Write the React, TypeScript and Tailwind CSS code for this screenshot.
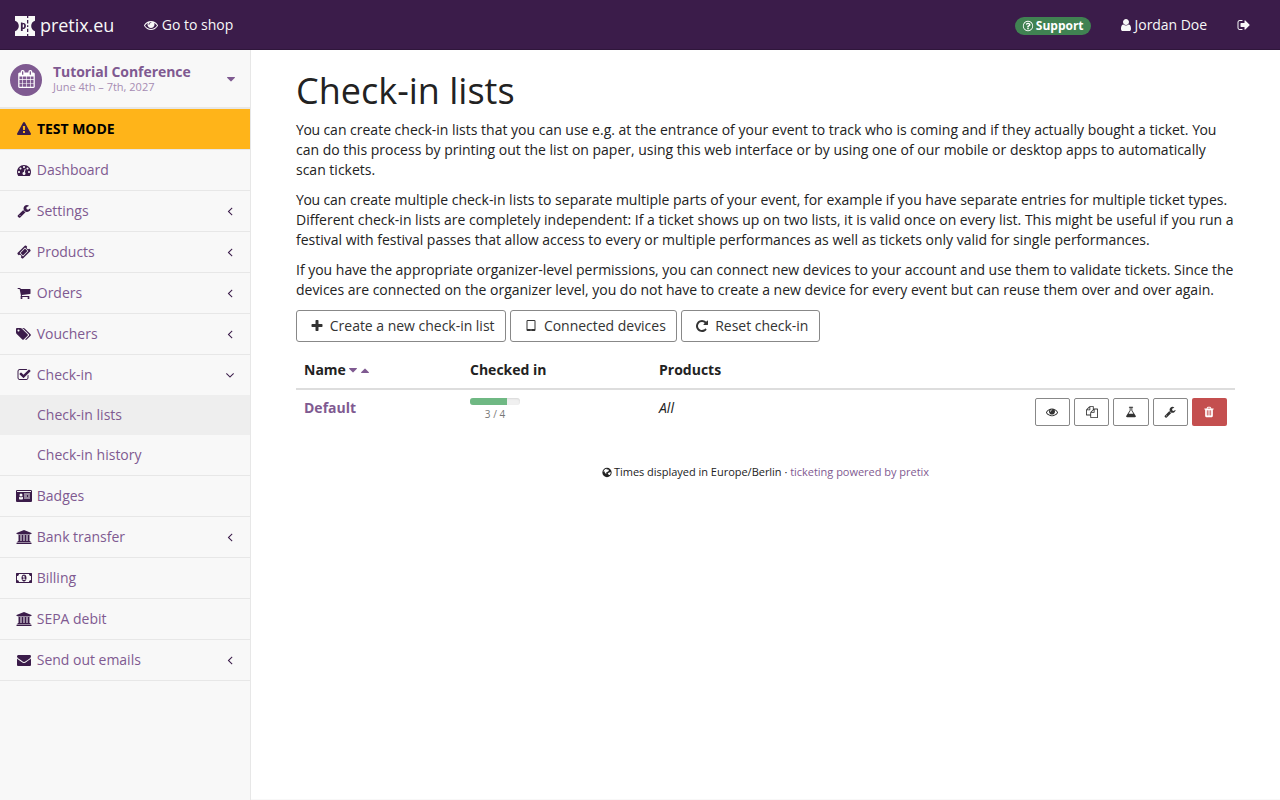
import React from "react";

const paths = {
  eye: "M1664 960q-152-236-381-353 61 104 61 225 0 185-131.5 316.5t-316.5 131.5-316.5-131.5-131.5-316.5q0-121 61-225-229 117-381 353 133 205 333.5 326.5t434.5 121.5 434.5-121.5 333.5-326.5zm-720-384q0-20-14-34t-34-14q-125 0-214.5 89.5t-89.5 214.5q0 20 14 34t34 14 34-14 14-34q0-86 61-147t147-61q20 0 34-14t14-34zm848 384q0 34-20 69-140 230-376.5 368.5t-499.5 138.5-499.5-139-376.5-368q-20-35-20-69t20-69q140-229 376.5-368t499.5-139 499.5 139 376.5 368q20 35 20 69z",
  user: "M1536 1399q0 109-62.5 187t-150.5 78h-854q-88 0-150.5-78t-62.5-187q0-85 8.5-160.5t31.5-152 58.5-131 94-89 134.5-34.5q131 128 313 128t313-128q76 0 134.5 34.5t94 89 58.5 131 31.5 152 8.5 160.5zm-256-887q0 159-112.5 271.5t-271.5 112.5-271.5-112.5-112.5-271.5 112.5-271.5 271.5-112.5 271.5 112.5 112.5 271.5z",
  signOut: "M704 1440q0 4 1 20t.5 26.5-3 23.5-10 19.5-20.5 6.5h-320q-119 0-203.5-84.5t-84.5-203.5v-704q0-119 84.5-203.5t203.5-84.5h320q13 0 22.5 9.5t9.5 22.5q0 4 1 20t.5 26.5-3 23.5-10 19.5-20.5 6.5h-320q-66 0-113 47t-47 113v704q0 66 47 113t113 47h312l11.5 1 11.5 3 8 5.5 7 9 2 13.5zm928-544q0 26-19 45l-544 544q-19 19-45 19t-45-19-19-45v-288h-448q-26 0-45-19t-19-45v-384q0-26 19-45t45-19h448v-288q0-26 19-45t45-19 45 19l544 544q19 19 19 45z",
  question: "M1008 1200v160q0 14-9 23t-23 9h-160q-14 0-23-9t-9-23v-160q0-14 9-23t23-9h160q14 0 23 9t9 23zm256-496q0 50-15 90t-45.5 69-52 44-59.5 36q-32 18-46.5 28t-26 24-11.5 29v32q0 14-9 23t-23 9h-160q-14 0-23-9t-9-23v-68q0-35 10.5-64.5t24-47.5 39-35.5 41-25.5 44.5-21q53-25 75-43t22-49q0-42-43.5-71.5t-95.5-29.5q-56 0-95 27-29 20-80 83-9 12-25 12-11 0-19-6l-108-82q-10-7-12-20t5-23q122-192 349-192 129 0 238.5 89.5t109.5 214.5zm-368-448q-130 0-248.5 51t-204 136.5-136.5 204-51 248.5 51 248.5 136.5 204 204 136.5 248.5 51 248.5-51 204-136.5 136.5-204 51-248.5-51-248.5-136.5-204-204-136.5-248.5-51zm768 640q0 209-103 385.5t-279.5 279.5-385.5 103-385.5-103-279.5-279.5-103-385.5 103-385.5 279.5-279.5 385.5-103 385.5 103 279.5 279.5 103 385.5z",
  calendar: "M192 1664h288v-288h-288v288zm352 0h320v-288h-320v288zm-352-352h288v-320h-288v320zm352 0h320v-320h-320v320zm-352-384h288v-288h-288v288zm736 736h320v-288h-320v288zm-384-736h320v-288h-320v288zm768 736h288v-288h-288v288zm-384-352h320v-320h-320v320zm-352-864v-288q0-13-9.5-22.5t-22.5-9.5h-64q-13 0-22.5 9.5t-9.5 22.5v288q0 13 9.5 22.5t22.5 9.5h64q13 0 22.5-9.5t9.5-22.5zm736 864h288v-320h-288v320zm-384-384h320v-288h-320v288zm384 0h288v-288h-288v288zm32-480v-288q0-13-9.5-22.5t-22.5-9.5h-64q-13 0-22.5 9.5t-9.5 22.5v288q0 13 9.5 22.5t22.5 9.5h64q13 0 22.5-9.5t9.5-22.5zm384-64v1280q0 52-38 90t-90 38h-1408q-52 0-90-38t-38-90v-1280q0-52 38-90t90-38h128v-96q0-66 47-113t113-47h64q66 0 113 47t47 113v96h384v-96q0-66 47-113t113-47h64q66 0 113 47t47 113v96h128q52 0 90 38t38 90z",
  warning: "M1024 1375v-190q0-14-9.5-23.5t-22.5-9.5h-192q-13 0-22.5 9.5t-9.5 23.5v190q0 14 9.5 23.5t22.5 9.5h192q13 0 22.5-9.5t9.5-23.5zm-2-374l18-459q0-12-10-19-13-11-24-11h-220q-11 0-24 11-10 7-10 21l17 457q0 10 10 16.5t24 6.5h185q14 0 23.5-6.5t10.5-16.5zm-14-934l768 1408q35 63-2 126-17 29-46.5 46t-63.5 17h-1536q-34 0-63.5-17t-46.5-46q-37-63-2-126l768-1408q17-31 47-49t65-18 65 18 47 49z",
  dashboard: "M384 1152q0-53-37.5-90.5t-90.5-37.5-90.5 37.5-37.5 90.5 37.5 90.5 90.5 37.5 90.5-37.5 37.5-90.5zm192-448q0-53-37.5-90.5t-90.5-37.5-90.5 37.5-37.5 90.5 37.5 90.5 90.5 37.5 90.5-37.5 37.5-90.5zm428 481l101-382q6-26-7.5-48.5t-38.5-29.5-48 6.5-30 39.5l-101 382q-60 5-107 43.5t-63 98.5q-20 77 20 146t117 89 146-20 89-117q16-60-6-117t-72-91zm660-33q0-53-37.5-90.5t-90.5-37.5-90.5 37.5-37.5 90.5 37.5 90.5 90.5 37.5 90.5-37.5 37.5-90.5zm-640-640q0-53-37.5-90.5t-90.5-37.5-90.5 37.5-37.5 90.5 37.5 90.5 90.5 37.5 90.5-37.5 37.5-90.5zm448 192q0-53-37.5-90.5t-90.5-37.5-90.5 37.5-37.5 90.5 37.5 90.5 90.5 37.5 90.5-37.5 37.5-90.5zm320 448q0 261-141 483-19 29-54 29h-1402q-35 0-54-29-141-221-141-483 0-182 71-348t191-286 286-191 348-71 348 71 286 191 191 286 71 348z",
  wrench: "M448 1472q0-26-19-45t-45-19-45 19-19 45 19 45 45 19 45-19 19-45zm644-420l-682 682q-37 37-90 37-52 0-91-37l-106-108q-38-36-38-90 0-53 38-91l681-681q39 98 114.5 173.5t173.5 114.5zm634-435q0 39-23 106-47 134-164.5 217.5t-258.5 83.5q-185 0-316.5-131.5t-131.5-316.5 131.5-316.5 316.5-131.5q58 0 121.5 16.5t107.5 46.5q16 11 16 28t-16 28l-293 169v224l193 107q5-3 79-48.5t135.5-81 70.5-35.5q15 0 23.5 10t8.5 25z",
  ticket: "M1024 452l316 316-572 572-316-316zm-211 979l618-618q19-19 19-45t-19-45l-362-362q-18-18-45-18t-45 18l-618 618q-19 19-19 45t19 45l362 362q18 18 45 18t45-18zm889-637l-907 908q-37 37-90.5 37t-90.5-37l-126-126q56-56 56-136t-56-136-136-56-136 56l-125-126q-37-37-37-90.5t37-90.5l907-906q37-37 90.5-37t90.5 37l125 125q-56 56-56 136t56 136 136 56 136-56l126 125q37 37 37 90.5t-37 90.5z",
  cart: "M704 1536q0 52-38 90t-90 38-90-38-38-90 38-90 90-38 90 38 38 90zm896 0q0 52-38 90t-90 38-90-38-38-90 38-90 90-38 90 38 38 90zm128-1088v512q0 24-16.5 42.5t-40.5 21.5l-1044 122q13 60 13 70 0 16-24 64h920q26 0 45 19t19 45-19 45-45 19h-1024q-26 0-45-19t-19-45q0-11 8-31.5t16-36 21.5-40 15.5-29.5l-177-823h-204q-26 0-45-19t-19-45 19-45 45-19h256q16 0 28.5 6.5t19.5 15.5 13 24.5 8 26 5.5 29.5 4.5 26h1201q26 0 45 19t19 45z",
  tags: "M384 448q0-53-37.5-90.5t-90.5-37.5-90.5 37.5-37.5 90.5 37.5 90.5 90.5 37.5 90.5-37.5 37.5-90.5zm1067 576q0 53-37 90l-491 492q-39 37-91 37-53 0-90-37l-715-716q-38-37-64.5-101t-26.5-117v-416q0-52 38-90t90-38h416q53 0 117 26.5t102 64.5l715 714q37 39 37 91zm384 0q0 53-37 90l-491 492q-39 37-91 37-36 0-59-14t-53-45l470-470q37-37 37-90 0-52-37-91l-715-714q-38-38-102-64.5t-117-26.5h224q53 0 117 26.5t102 64.5l715 714q37 39 37 91z",
  check: "M1472 930v318q0 119-84.5 203.5t-203.5 84.5h-832q-119 0-203.5-84.5t-84.5-203.5v-832q0-119 84.5-203.5t203.5-84.5h832q63 0 117 25 15 7 18 23 3 17-9 29l-49 49q-10 10-23 10-3 0-9-2-23-6-45-6h-832q-66 0-113 47t-47 113v832q0 66 47 113t113 47h832q66 0 113-47t47-113v-254q0-13 9-22l64-64q10-10 23-10 6 0 12 3 20 8 20 29zm231-489l-814 814q-24 24-57 24t-57-24l-430-430q-24-24-24-57t24-57l110-110q24-24 57-24t57 24l263 263 647-647q24-24 57-24t57 24l110 110q24 24 24 57t-24 57z",
  idCard: "M896 1196q0-77-17-141t-68-64q-66 64-171 64t-171-64q-51 0-68 64t-17 141q0 72 38 110t82 38h272q44 0 82-38t38-110zM832 768a192 192 0 1 0-384 0 192 192 0 0 0 384 0zM1792 1184v-64q0-32-32-32h-704q-32 0-32 32v64q0 32 32 32h704q32 0 32-32zM1408 928v-64q0-32-32-32h-320q-32 0-32 32v64q0 32 32 32h320q32 0 32-32zM1792 928v-64q0-32-32-32h-192q-32 0-32 32v64q0 32 32 32h192q32 0 32-32zM1792 672v-64q0-32-32-32h-704q-32 0-32 32v64q0 32 32 32h704q32 0 32-32zM1920 384v-96q0-32-32-32h-1728q-32 0-32 32v96zM2048 288v1216q0 66-47 113t-113 47h-1728q-66 0-113-47t-47-113v-1216q0-66 47-113t113-47h1728q66 0 113 47t47 113z",
  bank: "M960 0l960 384v128h-128q0 26-20.5 45t-48.5 19h-1526q-28 0-48.5-19t-20.5-45h-128v-128zm-704 640h256v768h128v-768h256v768h128v-768h256v768h128v-768h256v768h59q28 0 48.5 19t20.5 45v64h-1664v-64q0-26 20.5-45t48.5-19h59v-768zm1595 960q28 0 48.5 19t20.5 45v128h-1920v-128q0-26 20.5-45t48.5-19h1782z",
  money: "M832 1152h384v-96h-128v-448h-114l-148 137 77 80q42-37 55-57h2v288h-128v96zM1344 896q0 110-32.5 205t-127 164-160.5 69-160.5-69-127-164-32.5-205 32.5-205 127-164 160.5-69 160.5 69 127 164 32.5 205zM1920 1152v-512q-106 0-181-75t-75-181h-1280q0 106-75 181t-181 75v512q106 0 181 75t75 181h1280q0-106 75-181t181-75zM2048 320v1152q0 26-19 45t-45 19h-1920q-26 0-45-19t-19-45v-1152q0-26 19-45t45-19h1920q26 0 45 19t19 45z",
  envelope: "M1792 710v794q0 66-47 113t-113 47h-1472q-66 0-113-47t-47-113v-794q44 49 101 87 362 246 497 345 57 42 92.5 65.5t94.5 48 110 24.5h2q51 0 110-24.5t94.5-48 92.5-65.5q170-123 498-345 57-39 100-87zm0-294q0 79-49 151t-122 123q-376 261-468 325-10 7-42.5 31t-54 38.5-52 32.5-57.5 27-50 9h-2q-23 0-50-9t-57.5-27-52-32.5-54-38.5-42.5-31q-91-64-262-182.5t-205-142.5q-62-42-117-115.5t-55-136.5q0-78 41.5-130t118.5-52h1472q65 0 112.5 47t47.5 113z",
  trash: "M704 1376v-704q0-14-9-23t-23-9h-64q-14 0-23 9t-9 23v704q0 14 9 23t23 9h64q14 0 23-9t9-23zm256 0v-704q0-14-9-23t-23-9h-64q-14 0-23 9t-9 23v704q0 14 9 23t23 9h64q14 0 23-9t9-23zm256 0v-704q0-14-9-23t-23-9h-64q-14 0-23 9t-9 23v704q0 14 9 23t23 9h64q14 0 23-9t9-23zm-544-992h448l-48-117q-7-9-17-11h-317q-10 2-17 11zm928 32v64q0 14-9 23t-23 9h-96v948q0 83-47 143.5t-113 60.5h-832q-66 0-113-58.5t-47-141.5v-952h-96q-14 0-23-9t-9-23v-64q0-14 9-23t23-9h309l70-167q15-37 54-63t79-26h320q40 0 79 26t54 63l70 167h309q14 0 23 9t9 23z",
  copy: "M1696 384q40 0 68 28t28 68v1216q0 40-28 68t-68 28h-960q-40 0-68-28t-28-68v-288h-544q-40 0-68-28t-28-68v-672q0-40 20-88t48-76l408-408q28-28 76-48t88-20h416q40 0 68 28t28 68v328q68-40 128-40h416zm-544 213l-299 299h299v-299zm-640-384l-299 299h299v-299zm196 647l316-316v-416h-384v416q0 40-28 68t-68 28h-416v640h512v-256q0-40 20-88t48-76zm956 804v-1152h-384v416q0 40-28 68t-68 28h-416v640h896z",
  flask: "M1591 1448q56 89 21.5 152.5t-140.5 63.5h-1152q-106 0-140.5-63.5t21.5-152.5l503-793v-399h-64q-26 0-45-19t-19-45 19-45 45-19h512q26 0 45 19t19 45-19 45-45 19h-64v399zm-779-725l-272 429h712l-272-429-20-31v-436h-128v436z",
  plus: "M1600 736v192q0 40-28 68t-68 28h-416v416q0 40-28 68t-68 28h-192q-40 0-68-28t-28-68v-416h-416q-40 0-68-28t-28-68v-192q0-40 28-68t68-28h416v-416q0-40 28-68t68-28h192q40 0 68 28t28 68v416h416q40 0 68 28t28 68z",
  tablet: "M960 1408q0-26-19-45t-45-19-45 19-19 45 19 45 45 19 45-19 19-45zm384-160v-960q0-13-9.5-22.5t-22.5-9.5h-832q-13 0-22.5 9.5t-9.5 22.5v960q0 13 9.5 22.5t22.5 9.5h832q13 0 22.5-9.5t9.5-22.5zm128-960v1088q0 66-47 113t-113 47h-832q-66 0-113-47t-47-113v-1088q0-66 47-113t113-47h832q66 0 113 47t47 113z",
  repeat: "M1664 256v448q0 26-19 45t-45 19h-448q-42 0-59-40-17-39 14-69l138-138q-148-137-349-137-104 0-198.5 40.5t-163.5 109.5-109.5 163.5-40.5 198.5 40.5 198.5 109.5 163.5 163.5 109.5 198.5 40.5q119 0 225-52t179-147q7-10 23-12 15 0 25 9l137 138q9 8 9.5 20.5t-7.5 22.5q-109 132-264 204.5t-327 72.5q-156 0-298-61t-245-164-164-245-61-298 61-298 164-245 245-164 298-61q147 0 284.5 55.5t244.5 156.5l130-129q29-31 70-14 39 17 39 59z",
  angleLeft: "M1203 544q0 13-10 23l-393 393 393 393q10 10 10 23t-10 23l-50 50q-10 10-23 10t-23-10l-466-466q-10-10-10-23t10-23l466-466q10-10 23-10t23 10l50 50q10 10 10 23z",
  angleDown: "M1395 736q0 13-10 23l-466 466q-10 10-23 10t-23-10l-466-466q-10-10-10-23t10-23l50-50q10-10 23-10t23 10l393 393 393-393q10-10 23-10t23 10l50 50q10 10 10 23z",
  caretDown: "M1408 704q0 26-19 45l-448 448q-19 19-45 19t-45-19l-448-448q-19-19-19-45t19-45 45-19h896q26 0 45 19t19 45z",
  caretUp: "M1408 1216q0 26-19 45t-45 19h-896q-26 0-45-19t-19-45 19-45l448-448q19-19 45-19t45 19l448 448q19 19 19 45z",
  globe: "M896 128a768 768 0 1 0 0 1536 768 768 0 0 0 0-1536zM620 330l170-60 90 60-60 90 120 40 60-90 150 30-30 120 110 50-60 110-130 10-60 120-160 40-90 120 80 60-30 90-130-70-120-160-50-180-180 60q60-260 320-440zM1010 960l230-20 160-110 110 80q0 240-160 410l-160-30-90-130z",
};

type IconName = keyof typeof paths;

const centers: Partial<Record<IconName, number>> = { tags: 960, bank: 960, idCard: 1024, money: 1024 };

function Icon({ name, className = "" }: { name: IconName; className?: string }) {
  const cx = centers[name] ?? 896;
  return (
    <svg
      viewBox={`${cx - 1152} 0 2304 1792`}
      fill="currentColor"
      fillRule="evenodd"
      className={`shrink-0 overflow-visible ${className || "h-[14px] w-[18px]"}`}
      aria-hidden="true"
    >
      <path d={paths[name]} />
    </svg>
  );
}

function Logo() {
  return (
    <svg viewBox="0 0 20 20" className="h-5 w-5 shrink-0" aria-hidden="true">
      <path
        fill="#f8f8f8"
        fillRule="evenodd"
        d="M0 0H12V2H13.3V0H20V4.8C17.8 5.4 16.2 7.4 16.2 10S17.8 14.6 20 15.2V20H13.3V18H12V20H0V15.2C2.2 14.6 3.8 12.6 3.8 10S2.2 5.4 0 4.8ZM12 4V7.5H13.3V4ZM12 9.2V11H13.3V9.2ZM12 12.8V16H13.3V12.8ZM5.9 6.5V15H7.7V12.8C9.6 13.5 10.9 12 10.9 9.8S9.4 6.4 7.5 7.2V6.5ZM7.7 8.5C8.7 7.8 9.2 8.6 9.2 9.8S8.7 12 7.7 11.6Z"
      />
    </svg>
  );
}

function You() {
  return <span className="tracking-[-0.36px]">You</span>;
}

type Item = { label: string; icon: IconName; arrow?: IconName; children?: string[] };

const items: Item[] = [
  { label: "Dashboard", icon: "dashboard" },
  { label: "Settings", icon: "wrench", arrow: "angleLeft" },
  { label: "Products", icon: "ticket", arrow: "angleLeft" },
  { label: "Orders", icon: "cart", arrow: "angleLeft" },
  { label: "Vouchers", icon: "tags", arrow: "angleLeft" },
  { label: "Check-in", icon: "check", arrow: "angleDown", children: ["Check-in lists", "Check-in history"] },
  { label: "Badges", icon: "idCard" },
  { label: "Bank transfer", icon: "bank", arrow: "angleLeft" },
  { label: "Billing", icon: "money" },
  { label: "SEPA debit", icon: "bank" },
  { label: "Send out emails", icon: "envelope", arrow: "angleLeft" },
];

function Sidebar() {
  return (
    <aside className="w-[251px] shrink-0 border-r border-[#e7e7e7] bg-[#f8f8f8] text-[#7f5a91]">
      <div className="flex h-[59px] items-center border-b-2 border-[#e7e7e7] pl-[10px] pr-[10px]">
        <span className="mt-[2px] flex size-8 items-center justify-center rounded-full bg-[#7f5a91] text-white">
          <Icon name="calendar" className="mb-px h-[18px] w-[23px]" />
        </span>
        <span className="ml-[11px] flex-1 pb-px">
          <strong className="block leading-[16px] tracking-[-0.06px]">Tutorial Conference</strong>
          <span className="block text-[11px] leading-[13px] text-[#a68cb3]">June 4th – 7th, 2027</span>
        </span>
        <Icon name="caretDown" />
      </div>
      <div className="flex h-[41px] items-center border-b border-[#e7e7e7] bg-[#ffb419] pl-[15px] font-bold text-black">
        <Icon name="warning" className="h-[14px] w-[18px] text-[#3b1c4a]" />
        <span className="ml-[4px] tracking-[-0.05px]">TEST MODE</span>
      </div>
      <nav>
        {items.map((item) => (
          <div key={item.label} className="border-b border-[#e7e7e7]">
            <a className="flex h-10 items-center pl-[15px] pr-[11px]">
              <Icon name={item.icon} className="h-[14px] w-[18px] text-[#3b1c4a]" />
              <span className="ml-[3.8px] flex-1 tracking-[-0.02px]">{item.label}</span>
              {item.arrow && <Icon name={item.arrow} className="h-[14px] w-[18px] text-[#3b1c4a]" />}
            </a>
            {item.children?.map((child, i) => (
              <a key={child} className={`flex h-10 items-center pl-[37px] ${i === 0 ? "bg-[#eeeeee]" : ""}`}>
                {child}
              </a>
            ))}
          </div>
        ))}
      </nav>
    </aside>
  );
}

function Button({ icon, children }: { icon: IconName; children: React.ReactNode }) {
  return (
    <button className="flex h-8 items-center rounded-[3px] border border-[#888] pl-[11px] pr-[10.6px] text-[#333]">
      <Icon name={icon} />
      <span className="ml-[3.8px] tracking-[-0.02px]">{children}</span>
    </button>
  );
}

const actions: IconName[] = ["eye", "copy", "flask", "wrench"];

export default function App() {
  return (
    <div className="flex h-[800px] flex-col overflow-hidden bg-[#f8f8f8] font-['Open_Sans',sans-serif] text-[14px] leading-[20px] text-[#222]">
      <header className="flex h-[50px] shrink-0 items-center border-b border-[#2f163b] bg-[#3b1c4a] pl-[15px] pr-[27.5px] text-[#f8f8f8]">
        <div className="flex items-center gap-[5px] pt-[3px]">
          <Logo />
          <span className="relative -top-[1px] text-[18px] tracking-[-0.05px]">pretix.eu</span>
        </div>
        <a className="ml-[27.5px] flex items-center gap-[2px]">
          <Icon name="eye" />
          Go to shop
        </a>
        <div className="ml-auto flex items-center">
          <span className="mt-[3px] flex h-[18px] items-center rounded-full bg-[#408252] pl-[5px] pr-[7px] text-[12px] font-bold text-white">
            <Icon name="question" className="h-3 w-4" />
            Support
          </span>
          <a className="ml-[26px] flex items-center">
            <Icon name="user" />
            <span className="tracking-[-0.05px]">Jordan Doe</span>
          </a>
          <Icon name="signOut" className="ml-[27.5px] h-[14px] w-[18px]" />
        </div>
      </header>
      <div className="flex min-h-0 flex-1">
        <Sidebar />
        <main className="mb-px flex-1 bg-white pl-[45px] pr-[45px] pt-[21px]">
          <h1 className="mb-[9px] text-[36px] leading-[40px]">Check-in lists</h1>
          <p className="mb-[10px] tracking-[-0.004px]">
            <You /> can create check-in lists that you can use e.g. at the entrance of your event to track who is coming
            and if they actually bought a ticket. <You /> can do this process by printing out the list on paper, using
            this web interface or by using one of our mobile or desktop apps to automatically scan tickets.
          </p>
          <p className="mb-[10px] tracking-[-0.008px]">
            <You /> can create multiple check-in lists to separate multiple parts of your event, for example if you have
            separate entries for multiple ticket types. Different check-in lists are completely independent: If a ticket
            shows up on two lists, it is valid once on every list. This might be useful if you run a festival with festival
            passes that allow access to every or multiple performances as well as tickets only valid for single
            performances.
          </p>
          <p className="mb-[10px] tracking-[-0.015px]">
            If you have the appropriate organizer-level permissions, you can connect new devices to your account and use
            them to validate tickets. Since the devices are connected on the organizer level, you do not have to create a
            new device for every event but can reuse them over and over again.
          </p>
          <div className="flex gap-[4px]">
            <Button icon="plus">Create a new check-in list</Button>
            <Button icon="tablet">Connected devices</Button>
            <Button icon="repeat">Reset check-in</Button>
          </div>
          <div className="mt-[10px] grid grid-cols-[166px_189px_1fr] border-b-2 border-[#ddd] pb-[8px] pt-[8px] font-bold">
            <div className="flex items-center pl-2">
              Name
              <span className="ml-[2px] flex gap-[0.6px] text-[#7f5a91]">
                <Icon name="caretDown" className="-mx-[3.5px] h-[14px] w-[18px]" />
                <Icon name="caretUp" className="-mx-[3.5px] h-[14px] w-[18px]" />
              </span>
            </div>
            <div className="pl-2">Checked in</div>
            <div className="pl-2">Products</div>
          </div>
          <div className="grid grid-cols-[166px_189px_1fr_auto] pt-[8px]">
            <div className="pl-2 font-bold text-[#7f5a91]">Default</div>
            <div className="pl-2">
              <div className="h-[7px] w-[50px] overflow-hidden rounded-[3px] bg-[#f0f0f0] shadow-[inset_0_1px_2px_rgba(0,0,0,0.1)]">
                <div className="h-full w-[37px] bg-[#6fb883]" />
              </div>
              <div className="w-[50px] text-center text-[10px] leading-[18px] text-[#777]">3 / 4</div>
            </div>
            <div className="pl-2 italic">All</div>
            <div className="flex gap-[4px] pr-2">
              {actions.map((name) => (
                <button
                  key={name}
                  className="flex h-7 w-[35.3px] items-center justify-center rounded-[2px] border border-[#888] text-[#333]"
                >
                  <Icon name={name} className="h-3 w-4" />
                </button>
              ))}
              <button className="flex h-7 w-[35.2px] items-center justify-center rounded-[2px] bg-[#c44f4f] text-white">
                <Icon name="trash" className="h-3 w-4" />
              </button>
            </div>
          </div>
          <footer className="mt-[36px] flex items-center justify-center text-[11px] tracking-[-0.02px]">
            <Icon name="globe" className="-ml-[2px] h-[11px] w-[14px]" />
            Times displayed in Europe/Berlin ·&nbsp;<a className="text-[#7f5a91]">ticketing powered by pretix</a>
          </footer>
        </main>
      </div>
    </div>
  );
}
